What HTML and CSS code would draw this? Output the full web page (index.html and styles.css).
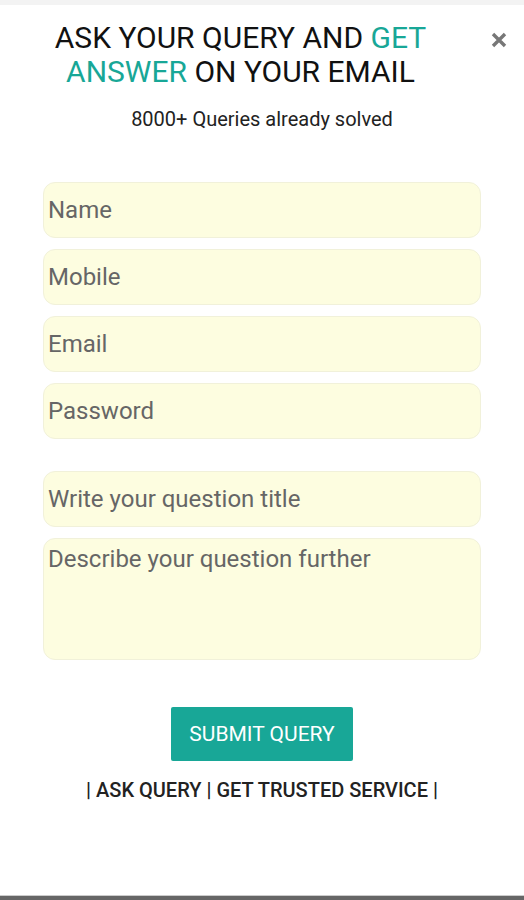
FILE: index.html
```html
<!DOCTYPE html>
<html>
<head>
<meta charset="utf-8">
<link rel="stylesheet" href="styles.css">
</head>
<body>
<div class="topbar"></div>
<div class="header">
  <h1 class="title">ASK YOUR QUERY AND <span class="accent">GET</span><br><span class="accent">ANSWER</span> ON YOUR EMAIL</h1>
  <button class="close" aria-label="Close">
    <svg width="16" height="16" viewBox="0 0 16 16"><path d="M2 2 L14 14 M14 2 L2 14" stroke="#777" stroke-width="3.4" stroke-linecap="butt"/></svg>
  </button>
</div>
<p class="sub">8000+ Queries already solved</p>
<form class="form">
  <div class="group">
    <input class="field" type="text" placeholder="Name">
    <input class="field" type="text" placeholder="Mobile">
    <input class="field" type="text" placeholder="Email">
    <input class="field" type="password" placeholder="Password">
  </div>
  <div class="group">
    <input class="field" type="text" placeholder="Write your question title">
    <textarea class="field area" placeholder="Describe your question further"></textarea>
  </div>
  <button class="submit" type="button">SUBMIT QUERY</button>
</form>
<p class="tag">| ASK QUERY | GET TRUSTED SERVICE |</p>
<div class="spacer"></div>
<div class="bottombar"></div>
</body>
</html>
```

FILE: styles.css
```css
html, body {
  margin: 0;
  padding: 0;
  background: #ffffff;
  font-family: Roboto, "Liberation Sans", sans-serif;
}
body {
  display: flex;
  flex-direction: column;
  min-height: 900px;
}
.topbar {
  height: 5px;
  background: #f3f3f3;
}
.header {
  display: flex;
  align-items: flex-start;
  padding-top: 16px;
}
.title {
  flex: 1;
  margin: 0;
  text-align: center;
  font-weight: 400;
  font-size: 30px;
  line-height: 34px;
  color: #111;
  padding: 0 20px;
}
.accent {
  color: #18a797;
}
.close {
  width: 36px;
  flex: none;
  background: none;
  border: none;
  padding: 0;
  margin: 11px 7px 0 0;
  line-height: 0;
  text-align: center;
}
.sub {
  margin: 18px 0 0;
  text-align: center;
  font-size: 20px;
  line-height: 24px;
  color: #222;
}
.form {
  display: flex;
  flex-direction: column;
  padding: 51px 43px 0;
  gap: 32px;
}
.group {
  display: flex;
  flex-direction: column;
  gap: 11px;
}
.field {
  display: block;
  box-sizing: border-box;
  width: 100%;
  height: 56px;
  margin: 0;
  padding: 0 4px;
  background: #fdfde0;
  border: 1px solid #f1f1da;
  border-radius: 12px;
  font-family: Roboto, "Liberation Sans", sans-serif;
  font-size: 24px;
  color: #333;
  outline: none;
}
.field::placeholder {
  color: #666;
}
.area {
  height: 122px;
  padding-top: 6px;
  resize: none;
}
.submit {
  align-self: center;
  margin-top: 15px;
  width: 182px;
  height: 54px;
  background: #18a797;
  color: #fff;
  border: none;
  border-radius: 2px;
  font-family: Roboto, "Liberation Sans", sans-serif;
  font-size: 21px;
}
.tag {
  margin: 18px 0 0;
  text-align: center;
  font-size: 20px;
  line-height: 22px;
  color: #222;
  font-weight: 500;
}
.spacer {
  flex: 1;
}
.bottombar {
  height: 4px;
  background: #666;
  border-top: 1px solid #ccc;
}
```
